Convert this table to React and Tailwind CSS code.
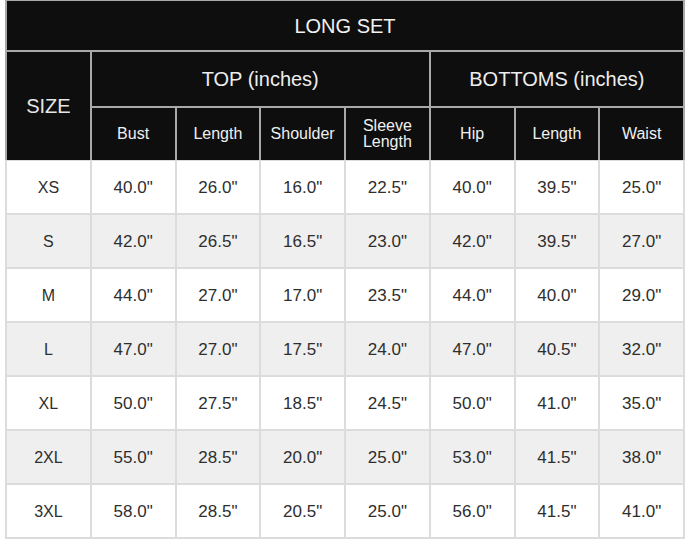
import React from "react";

const rows = [
  ["XS", "40.0\"", "26.0\"", "16.0\"", "22.5\"", "40.0\"", "39.5\"", "25.0\""],
  ["S", "42.0\"", "26.5\"", "16.5\"", "23.0\"", "42.0\"", "39.5\"", "27.0\""],
  ["M", "44.0\"", "27.0\"", "17.0\"", "23.5\"", "44.0\"", "40.0\"", "29.0\""],
  ["L", "47.0\"", "27.0\"", "17.5\"", "24.0\"", "47.0\"", "40.5\"", "32.0\""],
  ["XL", "50.0\"", "27.5\"", "18.5\"", "24.5\"", "50.0\"", "41.0\"", "35.0\""],
  ["2XL", "55.0\"", "28.5\"", "20.0\"", "25.0\"", "53.0\"", "41.5\"", "38.0\""],
  ["3XL", "58.0\"", "28.5\"", "20.5\"", "25.0\"", "56.0\"", "41.5\"", "41.0\""],
];

const sub = ["Bust", "Length", "Shoulder", null, "Hip", "Length", "Waist"];

export default function App() {
  return (
    <div className="w-[687px] h-[543px] bg-white font-['Liberation_Sans',Arial,sans-serif]">
      <div className="ml-[5px] w-[680px]">
        {/* header */}
        <div className="bg-[#a9a9a9] p-[2px] pt-[1px] pb-0 grid grid-cols-8 grid-rows-[49px_54px_52px] gap-[2px]">
          <div className="col-span-8 bg-[#0e0e0e] text-[#f2f2f2] text-[20px] flex items-center justify-center">
            LONG SET
          </div>
          <div className="row-span-2 bg-[#0e0e0e] text-[#e6e6e6] text-[20px] flex items-center justify-center">
            SIZE
          </div>
          <div className="col-span-4 bg-[#0e0e0e] text-[#ededed] text-[20px] flex items-center justify-center">
            TOP (inches)
          </div>
          <div className="col-span-3 bg-[#0e0e0e] text-[#ededed] text-[20px] flex items-center justify-center">
            BOTTOMS (inches)
          </div>
          {sub.map((s, i) => (
            <div
              key={i}
              className="bg-[#0e0e0e] text-[#f0f0f0] text-[16px] flex items-center justify-center text-center leading-[16px]"
            >
              {s === null ? (
                <span>
                  Sleeve
                  <br />
                  Length
                </span>
              ) : (
                <span>{s}</span>
              )}
            </div>
          ))}
        </div>
        {/* body */}
        <div className="bg-[#dcdcdc] p-[2px] pt-[1px] grid grid-cols-8 auto-rows-[52px] gap-[2px]">
          {rows.map((r, ri) =>
            r.map((c, ci) => (
              <div
                key={ri + "-" + ci}
                className={
                  (ri % 2 === 1 ? "bg-[#efefef] " : "bg-white ") +
                  (ci === 0 ? "text-[16px] " : "text-[17px] ") +
                  "flex items-center justify-center pt-[1px] text-[#2e2e2e]"
                }
              >
                {c}
              </div>
            ))
          )}
        </div>
      </div>
    </div>
  );
}
